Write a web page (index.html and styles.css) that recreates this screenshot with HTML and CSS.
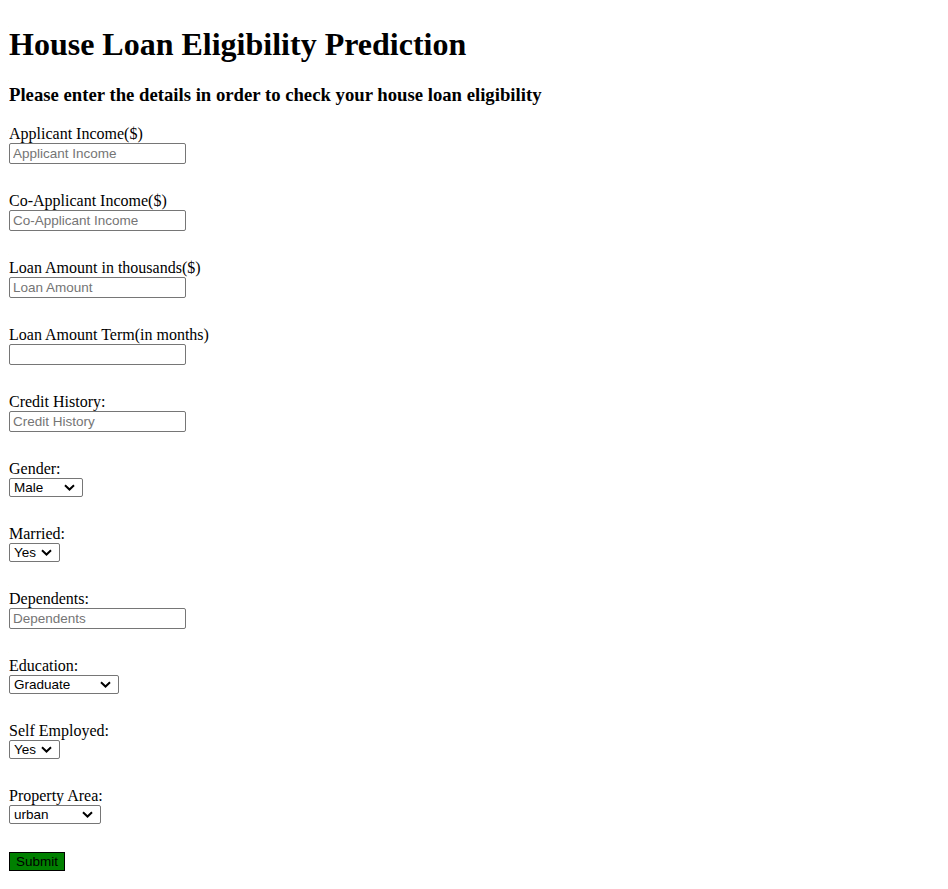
FILE: index.html
```html
<!DOCTYPE html>
<html>
<head>
<meta charset="utf-8">
<title>House Loan Eligibility Prediction</title>
<link rel="stylesheet" href="styles.css">
</head>
<body class="page">
<h1 class="title">House Loan Eligibility Prediction</h1>
<h3 class="subtitle">Please enter the details in order to check your house loan eligibility</h3>
<form class="loan-form">
  <div class="field">
    <label class="field-label" for="ai">Applicant Income($)</label>
    <input class="text-input" id="ai" type="text" placeholder="Applicant Income">
  </div>
  <div class="field">
    <label class="field-label" for="ci">Co-Applicant Income($)</label>
    <input class="text-input" id="ci" type="text" placeholder="Co-Applicant Income">
  </div>
  <div class="field">
    <label class="field-label" for="la">Loan Amount in thousands($)</label>
    <input class="text-input" id="la" type="text" placeholder="Loan Amount">
  </div>
  <div class="field">
    <label class="field-label" for="lt">Loan Amount Term(in months)</label>
    <input class="text-input" id="lt" type="text">
  </div>
  <div class="field">
    <label class="field-label" for="ch">Credit History:</label>
    <input class="text-input" id="ch" type="text" placeholder="Credit History">
  </div>
  <div class="field">
    <label class="field-label" for="g">Gender:</label>
    <select class="select-input sel-gender" id="g"><option>Male</option><option>Female</option></select>
  </div>
  <div class="field">
    <label class="field-label" for="m">Married:</label>
    <select class="select-input sel-yesno" id="m"><option>Yes</option><option>No</option></select>
  </div>
  <div class="field">
    <label class="field-label" for="d">Dependents:</label>
    <input class="text-input" id="d" type="text" placeholder="Dependents">
  </div>
  <div class="field">
    <label class="field-label" for="e">Education:</label>
    <select class="select-input sel-edu" id="e"><option>Graduate</option><option>Not Graduate</option></select>
  </div>
  <div class="field">
    <label class="field-label" for="se">Self Employed:</label>
    <select class="select-input sel-yesno" id="se"><option>Yes</option><option>No</option></select>
  </div>
  <div class="field">
    <label class="field-label" for="pa">Property Area:</label>
    <select class="select-input sel-area" id="pa"><option>urban</option><option>semiurban</option><option>rural</option></select>
  </div>
  <div class="field">
    <button class="submit-btn" type="submit">Submit</button>
  </div>
</form>
</body>
</html>
```
FILE: styles.css
```css
.page {
  margin: 8px 8px 8px 9px;
  font-family: "Liberation Serif", "Times New Roman", serif;
  font-size: 16px;
  color: #000;
  background: #fff;
}
.title {
  font-size: 32px;
  font-weight: bold;
  margin: 17.5px 0 21.44px;
}
.subtitle {
  font-size: 18.72px;
  font-weight: bold;
  margin: 18.72px 0;
}
.loan-form {
  display: flex;
  flex-direction: column;
  align-items: flex-start;
  gap: 28px;
}
.field {
  display: flex;
  flex-direction: column;
  align-items: flex-start;
}
.field-label {
  line-height: 18px;
}
.text-input {
  box-sizing: border-box;
  width: 177px;
  height: 21px;
  margin: 0;
  padding: 1px 3px;
  border: 1px solid #767676;
  border-radius: 2px;
  font-family: "Liberation Sans", Arial, sans-serif;
  font-size: 13.5px;
  color: #000;
}
.text-input::placeholder {
  color: #757575;
}
.select-input {
  -webkit-appearance: none;
  appearance: none;
  box-sizing: border-box;
  height: 19px;
  margin: 0;
  padding: 0 20px 0 4px;
  font-family: "Liberation Sans", Arial, sans-serif;
  font-size: 13.5px;
  line-height: 17px;
  color: #000;
  border: 1px solid #767676;
  border-radius: 2px;
  background-color: #fff;
  background-image: url("data:image/svg+xml,%3Csvg xmlns='http://www.w3.org/2000/svg' width='11' height='7' viewBox='0 0 11 7'%3E%3Cpath d='M1 1.2L5.5 5.5L10 1.2' fill='none' stroke='%23000' stroke-width='2'/%3E%3C/svg%3E");
  background-repeat: no-repeat;
  background-position: right 7px center;
  background-size: 11px 7px;
}
.sel-gender { width: 74px; }
.sel-yesno { width: 51px; }
.sel-edu { width: 110px; }
.sel-area { width: 92px; }
.submit-btn {
  box-sizing: border-box;
  width: 56px;
  height: 19px;
  margin: 0;
  padding: 0 6px;
  background: #008000;
  border: 1px solid #000;
  border-radius: 0;
  font-family: "Liberation Sans", Arial, sans-serif;
  font-size: 13.5px;
  line-height: 17px;
  color: #000;
}
```
